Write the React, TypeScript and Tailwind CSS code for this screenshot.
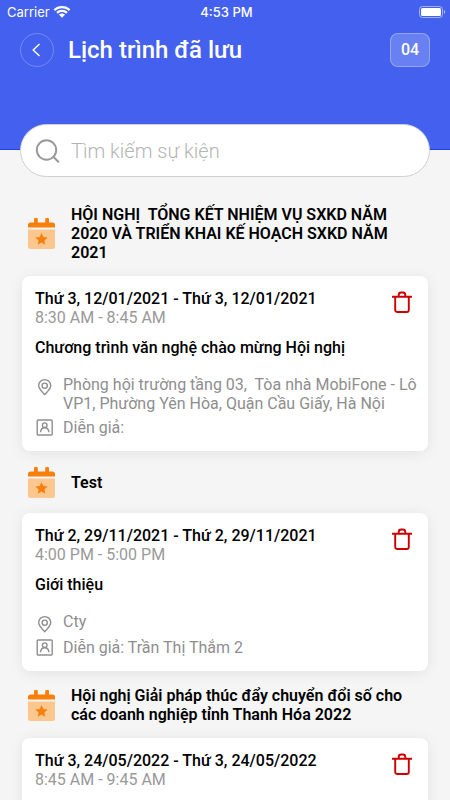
import { useState } from 'react'

type EventItem = {
  title: string
  date: string
  time: string
  name?: string
  place?: string
  speaker?: string
}

const EVENTS: EventItem[] = [
  {
    title: 'HỘI NGHỊ  TỔNG KẾT NHIỆM VỤ SXKD NĂM 2020 VÀ TRIỂN KHAI KẾ HOẠCH SXKD NĂM 2021',
    date: 'Thứ 3, 12/01/2021 - Thứ 3, 12/01/2021',
    time: '8:30 AM - 8:45 AM',
    name: 'Chương trình văn nghệ chào mừng Hội nghị',
    place: 'Phòng hội trường tầng 03,  Tòa nhà MobiFone - Lô VP1, Phường Yên Hòa, Quận Cầu Giấy, Hà Nội',
    speaker: '',
  },
  {
    title: 'Test',
    date: 'Thứ 2, 29/11/2021 - Thứ 2, 29/11/2021',
    time: '4:00 PM - 5:00 PM',
    name: 'Giới thiệu',
    place: 'Cty',
    speaker: 'Trần Thị Thắm 2',
  },
  {
    title: 'Hội nghị Giải pháp thúc đẩy chuyển đổi số cho các doanh nghiệp tỉnh Thanh Hóa 2022',
    date: 'Thứ 3, 24/05/2022 - Thứ 3, 24/05/2022',
    time: '8:45 AM - 9:45 AM',
  },
]

function StatusBar() {
  return (
    <div className="grid h-6 grid-cols-3 items-center pr-1 pl-[7px] font-['Inter',sans-serif] text-[13px] leading-6 text-white">
      <div className="flex items-center gap-[3px]">
        <span>Carrier</span>
        <IconWifi />
      </div>
      <span className="text-center font-medium">4:53 PM</span>
      <div className="flex justify-end">
        <IconBattery />
      </div>
    </div>
  )
}

function Header({ count }: { count: number }) {
  return (
    <header className="h-[150px] border-b border-[#1a43e0] bg-[#4361ee]">
      <StatusBar />
      <div className="flex items-center px-5 pt-[9px] text-white">
        <button type="button" aria-label="Quay lại" className="flex size-[34px] items-center justify-center rounded-full border border-white/25">
          <IconBack />
        </button>
        <h1 className="ml-[14px] flex-1 text-2xl leading-8 font-medium">Lịch trình đã lưu</h1>
        <span className="flex h-[34px] w-10 items-center justify-center rounded-lg border border-white/30 bg-white/20 text-base font-medium">
          {String(count).padStart(2, '0')}
        </span>
      </div>
    </header>
  )
}

function EventCard({ event, onDelete }: { event: EventItem; onDelete: () => void }) {
  return (
    <article className="min-h-[158px] rounded-lg bg-white pt-[13px] pr-1 pb-[14px] pl-[13px] shadow-[0_2px_14px_rgba(0,0,0,0.08)]">
      <div className="flex items-start justify-between pr-3">
        <div>
          <p className="font-medium text-black">{event.date}</p>
          <p className="text-[#999999]">{event.time}</p>
        </div>
        <button type="button" aria-label="Xóa" className="pt-[1px]" onClick={onDelete}>
          <IconTrash />
        </button>
      </div>
      {event.name && <h3 className="mt-[11px] font-medium text-black">{event.name}</h3>}
      {event.place && (
        <div className="mt-[18px] flex gap-[9px] text-[#8e8e8e]">
          <span className="pt-[3px]"><IconPin /></span>
          <p className="whitespace-pre-wrap">{event.place}</p>
        </div>
      )}
      {event.speaker !== undefined && (
        <div className="mt-[5px] flex items-center gap-[9px] text-[#8e8e8e]">
          <IconSpeaker />
          <p>Diễn giả: {event.speaker}</p>
        </div>
      )}
    </article>
  )
}

export default function App() {
  const [query, setQuery] = useState('')
  const [events, setEvents] = useState(EVENTS)

  const shown = events.filter(e => `${e.title} ${e.name ?? ''}`.toLowerCase().includes(query.toLowerCase()))
  const remove = (event: EventItem) => setEvents(list => list.filter(e => e !== event))

  return (
    <div className="h-screen overflow-hidden bg-[#f5f5f5] font-['Roboto',sans-serif] text-base leading-[19px]">
      <Header count={events.length + 1} />

      <label className="relative mx-5 -mt-[26px] flex h-[53px] items-center gap-[10px] rounded-full border border-[#d0d0d0] bg-white pr-5 pl-[14px]">
        <IconSearch />
        <input
          type="text"
          aria-label="Tìm kiếm sự kiện"
          placeholder="Tìm kiếm sự kiện"
          value={query}
          onChange={e => setQuery(e.target.value)}
          className="min-w-0 flex-1 bg-transparent text-xl leading-7 font-light text-black outline-none placeholder:text-[#b4b4b4]"
        />
      </label>

      <main className="px-[22px] pt-[13px]">
        {shown.map(event => (
          <section key={event.title}>
            <div className="flex items-center gap-[15px] pt-[15px] pr-3 pb-[14px] pl-[5px]">
              <IconCalendar />
              <h2 className="flex-1 font-semibold whitespace-pre-wrap text-black">{event.title}</h2>
            </div>
            <EventCard event={event} onDelete={() => remove(event)} />
          </section>
        ))}
      </main>
    </div>
  )
}

function IconWifi() {
  return (
    <svg width="18" height="14" viewBox="0 0 18 14" fill="currentColor">
      <path d="M9 1C5.700 1 2.800 2.200.6 4.300L2.200 5.900C4 4.200 6.400 3.200 9 3.200s5 1 6.800 2.700l1.600-1.600C15.200 2.200 12.300 1 9 1z" />
      <path d="M9 4.800c-2.200 0-4.200.8-5.700 2.200l1.600 1.700C6 7.600 7.400 7 9 7s3 .6 4.100 1.700L14.700 7C13.200 5.600 11.200 4.800 9 4.800z" />
      <path d="M9 8.500c-1.200 0-2.200.5-3 1.200l3 3 3-3c-.8-.7-1.800-1.200-3-1.200z" />
    </svg>
  )
}

function IconBattery() {
  return (
    <svg width="28" height="14" viewBox="0 0 28 14" fill="none">
      <rect x="1.500" y="1.500" width="23" height="11" rx="3" stroke="#fff" strokeOpacity="0.5" />
      <rect x="3" y="3" width="20" height="8" rx="1.500" fill="#fff" />
      <path d="M26 5v4c.8-.4 1.200-1.100 1.200-2S26.800 5.400 26 5z" fill="#fff" fillOpacity="0.600" />
    </svg>
  )
}

function IconBack() {
  return (
    <svg width="14" height="14" viewBox="0 0 14 14" fill="none" stroke="currentColor" strokeWidth="1.400">
      <path d="M9.500 1 3.200 7l6.300 6" />
    </svg>
  )
}

function IconSearch() {
  return (
    <svg className="shrink-0" width="26" height="26" viewBox="0 0 26 26" fill="none" stroke="#999" strokeWidth="2" strokeLinecap="round">
      <circle cx="11.500" cy="12" r="9.700" />
      <path d="m18.500 19 4.800 4.800" />
    </svg>
  )
}

function IconCalendar() {
  return (
    <svg className="shrink-0" width="29" height="33" viewBox="0 0 29 33">
      <path d="M1 12.500h27V29.500a2.500 2.500 0 0 1-2.500 2.500h-22A2.500 2.500 0 0 1 1 29.500z" fill="#fbc78f" />
      <path d="M1 10.500V8a2.500 2.500 0 0 1 2.500-2.500H7V2a1 1 0 0 1 1-1h1.800a1 1 0 0 1 1 1v3.500h7.400V2a1 1 0 0 1 1-1H21a1 1 0 0 1 1 1v3.500h3.500A2.500 2.500 0 0 1 28 8v2.500z" fill="#f97f0b" />
      <path d="m14.500 16 1.800 4 4.400.5-3.300 2.900.9 4.300-3.800-2.200-3.800 2.200.9-4.300-3.300-2.900 4.400-.5z" fill="#f97f0b" />
    </svg>
  )
}

function IconTrash() {
  return (
    <svg width="20" height="24" viewBox="0 0 20 24" fill="none" stroke="#cc0000" strokeWidth="1.900" strokeLinejoin="round">
      <path d="M.3 6.800h19.400" strokeLinecap="round" />
      <path d="M6.700 6.500V5a2.500 2.500 0 0 1 2.500-2.500h1.600A2.500 2.500 0 0 1 13.300 5v1.500" />
      <path d="M3.200 7v13a2 2 0 0 0 2 2h9.600a2 2 0 0 0 2-2V7" />
    </svg>
  )
}

function IconPin() {
  return (
    <svg width="19" height="18" viewBox="0 0 19 18" fill="none" stroke="currentColor" strokeWidth="1.400">
      <path d="M9.700 16.600C7.500 14.200 3.700 11.200 3.700 7.600a6 6 0 0 1 12 0c0 3.600-3.800 6.600-6 9z" />
      <circle cx="9.700" cy="7.700" r="2.600" />
    </svg>
  )
}

function IconSpeaker() {
  return (
    <svg width="19" height="19" viewBox="0 0 19 19" fill="none" stroke="currentColor" strokeWidth="1.400">
      <rect x="2.200" y="2" width="15" height="15" rx="1" />
      <circle cx="9.700" cy="7.200" r="2.300" />
      <path d="M5.500 14.200c.2-2.700 1.700-4.500 4.200-4.500s4 1.800 4.200 4.500" />
    </svg>
  )
}
